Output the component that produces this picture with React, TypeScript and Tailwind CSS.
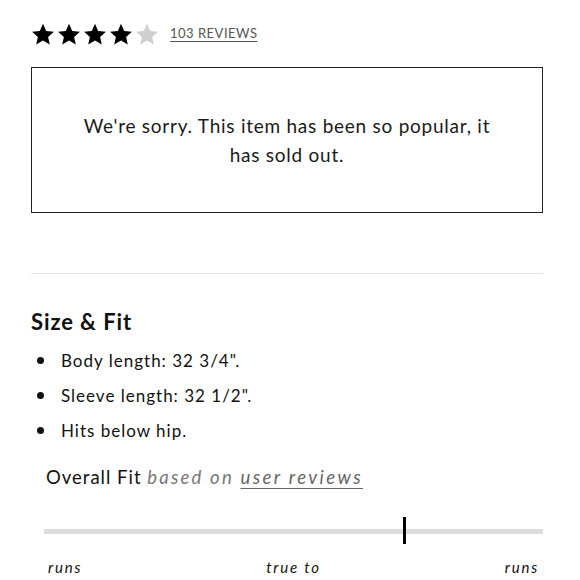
import React from "react";

function Star({ filled }: { filled: boolean }) {
  return (
    <svg width="24" height="23" viewBox="0 0 24 23" className={filled ? "text-black" : "text-[#cfcfcf]"}>
      <path
        fill="currentColor"
        d="M12 0.8l3.2 7.1 7.7 0.8-5.8 5.2 1.7 7.6L12 17.6l-6.8 3.9 1.7-7.6L1.1 8.7l7.7-0.8z"
      />
    </svg>
  );
}

export default function App() {
  const font = { fontFamily: "Lato, 'Open Sans', sans-serif" };
  return (
    <div className="w-[580px] h-[580px] overflow-hidden bg-white text-[#111]" style={font}>
      <div className="pl-[31px] pr-[37px] pt-[22px]">
        <div className="flex items-center h-[24px]">
          <div className="flex items-center gap-[2px]">
            <Star filled />
            <Star filled />
            <Star filled />
            <Star filled />
            <Star filled={false} />
          </div>
          <a className="ml-[11px] text-[13px] tracking-[0.5px] text-[#555] underline underline-offset-[3px]">
            103 REVIEWS
          </a>
        </div>

        <div className="mt-[21px] h-[146px] border border-[#222] flex items-center justify-center">
          <p className="w-[440px] text-center text-[19px] leading-[29px] tracking-[0.75px] text-[#1a1a1a]">
            We're sorry. This item has been so popular, it has sold out.
          </p>
        </div>

        <div className="mt-[60px] border-t border-[#e3e3e3]" />

        <h2 className="mt-[34px] text-[22px] font-bold leading-[28px] tracking-[0.9px] text-[#111]">Size &amp; Fit</h2>

        <ul className="mt-[7px] pl-[6px]">
          {["Body length: 32 3/4\".", "Sleeve length: 32 1/2\".", "Hits below hip."].map((t) => (
            <li key={t} className="flex items-center h-[35px] text-[17px] tracking-[1px]">
              <span className="w-[7px] h-[7px] rounded-full bg-[#111] mr-[17px]" />
              {t}
            </li>
          ))}
        </ul>

        <div className="mt-[15px] pl-[15px] text-[18.5px] leading-[28px]">
          <span className="text-[#111] tracking-[1px]">Overall Fit </span>
          <span className="italic text-[#777] tracking-[2.2px]">based on </span>
          <span className="italic text-[#666] tracking-[2.4px] underline underline-offset-[4px]">user reviews</span>
        </div>

        <div className="relative mt-[38px] ml-[13px] h-[5px] bg-[#dddddd]">
          <div className="absolute left-[359px] top-[-12px] w-[3px] h-[27px] bg-black" />
        </div>

        <div className="mt-[23px] ml-[17px] mr-[4px] flex justify-between text-[15px] leading-[20px] italic tracking-[1.8px] text-[#111]">
          <span>runs</span>
          <span>true to</span>
          <span>runs</span>
        </div>
      </div>
    </div>
  );
}
